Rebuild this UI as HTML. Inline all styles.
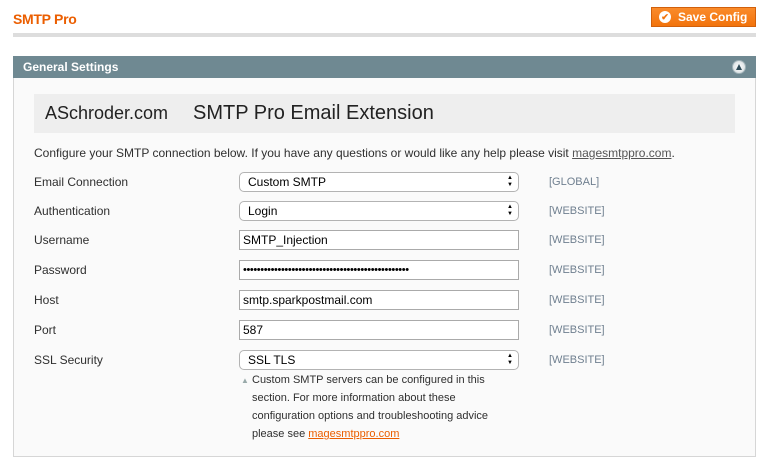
<!DOCTYPE html>
<html><head><meta charset="utf-8"><style>
*{margin:0;padding:0;box-sizing:border-box}
body{width:764px;height:463px;background:#fff;font-family:"Liberation Sans",Arial,sans-serif;position:relative;overflow:hidden;color:#2f2f2f}
.abs{position:absolute}
.title{left:13px;top:11px;font-size:14px;font-weight:bold;color:#eb5e00;letter-spacing:-0.3px}
.btn{left:651px;top:7px;width:105px;height:20px;background:linear-gradient(#fa8b2b,#f2730c);border:1px solid #d1600b;color:#fff;font-weight:bold;font-size:12px;line-height:18px;padding-left:26px}
.btn .ck{position:absolute;left:7px;top:3px;width:12px;height:12px;border-radius:50%;background:#fff;color:#f2730c;font-size:9px;line-height:12px;text-align:center}
.bar{left:13px;top:33px;width:743px;height:4px;background:#dddddd}
.hdr{left:13px;top:56px;width:743px;height:22px;background:#6f8992;color:#fff;font-weight:bold;font-size:12px;line-height:22px;padding-left:10px}
.tog{right:10px;top:4px;width:14px;height:14px;border-radius:50%;background:radial-gradient(#fff,#cfd8db);border:1px solid #9fb1b7}
.tog:after{content:"";position:absolute;left:3px;top:3px;border-left:3.5px solid transparent;border-right:3.5px solid transparent;border-bottom:6px solid #2e4b58}
.fs{left:13px;top:78px;width:743px;height:379px;background:#fafafa;border:1px solid #d6d6d6;border-top:none}
.banner{left:34px;top:94px;width:701px;height:39px;background:#eeeeee}
.banner .a{position:absolute;left:11px;top:9px;font-size:18px;color:#222}
.banner .b{position:absolute;left:159px;top:8px;font-size:20px;color:#222}
.t{font-size:12px;color:#2f2f2f}
.lbl{left:34px;font-size:12px}
.in{left:239px;width:280px;height:20px;background:#fff;border:1px solid #aaa;font-size:12px;padding-left:3px;line-height:18px;color:#000}
.sel{border-radius:5px;border-color:#b3b3b3;padding-left:8px}
.sel:after{content:"▲";position:absolute;right:5px;top:2px;font-size:6px;line-height:6px}
.sel:before{content:"▼";position:absolute;right:5px;top:9px;font-size:6px;line-height:6px}
.sc{left:549px;font-size:11px;color:#6f7f8f}
a{color:#eb5e00;text-decoration:underline}
</style></head><body>
<div class="abs title">SMTP Pro</div>
<div class="abs btn"><span class="ck">✔</span>Save Config</div>
<div class="abs bar"></div>
<div class="abs fs"></div>
<div class="abs hdr">General Settings<div class="abs tog"></div></div>
<div class="abs banner"><span class="a">ASchroder.com</span><span class="b">SMTP Pro Email Extension</span></div>
<div class="abs t" style="left:34px;top:146px">Configure your SMTP connection below. If you have any questions or would like any help please visit <span style="color:#555;text-decoration:underline">magesmtppro.com</span>.</div>

<div class="abs lbl" style="top:175px">Email Connection</div>
<div class="abs in sel" style="top:172px">Custom SMTP</div>
<div class="abs sc" style="top:176px">[GLOBAL]</div>

<div class="abs lbl" style="top:204px">Authentication</div>
<div class="abs in sel" style="top:201px">Login</div>
<div class="abs sc" style="top:205px">[WEBSITE]</div>

<div class="abs lbl" style="top:233px">Username</div>
<div class="abs in" style="top:230px">SMTP_Injection</div>
<div class="abs sc" style="top:234px">[WEBSITE]</div>

<div class="abs lbl" style="top:263px">Password</div>
<div class="abs in" style="top:260px;font-size:11px;letter-spacing:-0.4px">••••••••••••••••••••••••••••••••••••••••••••••••</div>
<div class="abs sc" style="top:264px">[WEBSITE]</div>

<div class="abs lbl" style="top:293px">Host</div>
<div class="abs in" style="top:290px">smtp.sparkpostmail.com</div>
<div class="abs sc" style="top:294px">[WEBSITE]</div>

<div class="abs lbl" style="top:323px">Port</div>
<div class="abs in" style="top:320px">587</div>
<div class="abs sc" style="top:324px">[WEBSITE]</div>

<div class="abs lbl" style="top:353px">SSL Security</div>
<div class="abs in sel" style="top:350px">SSL TLS</div>
<div class="abs sc" style="top:354px">[WEBSITE]</div>

<div class="abs" style="left:241px;top:376px;font-size:8px;color:#9aa">▲</div>
<div class="abs" style="left:252px;top:371px;font-size:11px;line-height:18px;color:#2f2f2f;width:260px">Custom SMTP servers can be configured in this section. For more information about these configuration options and troubleshooting advice please see <a>magesmtppro.com</a></div>
</body></html>
